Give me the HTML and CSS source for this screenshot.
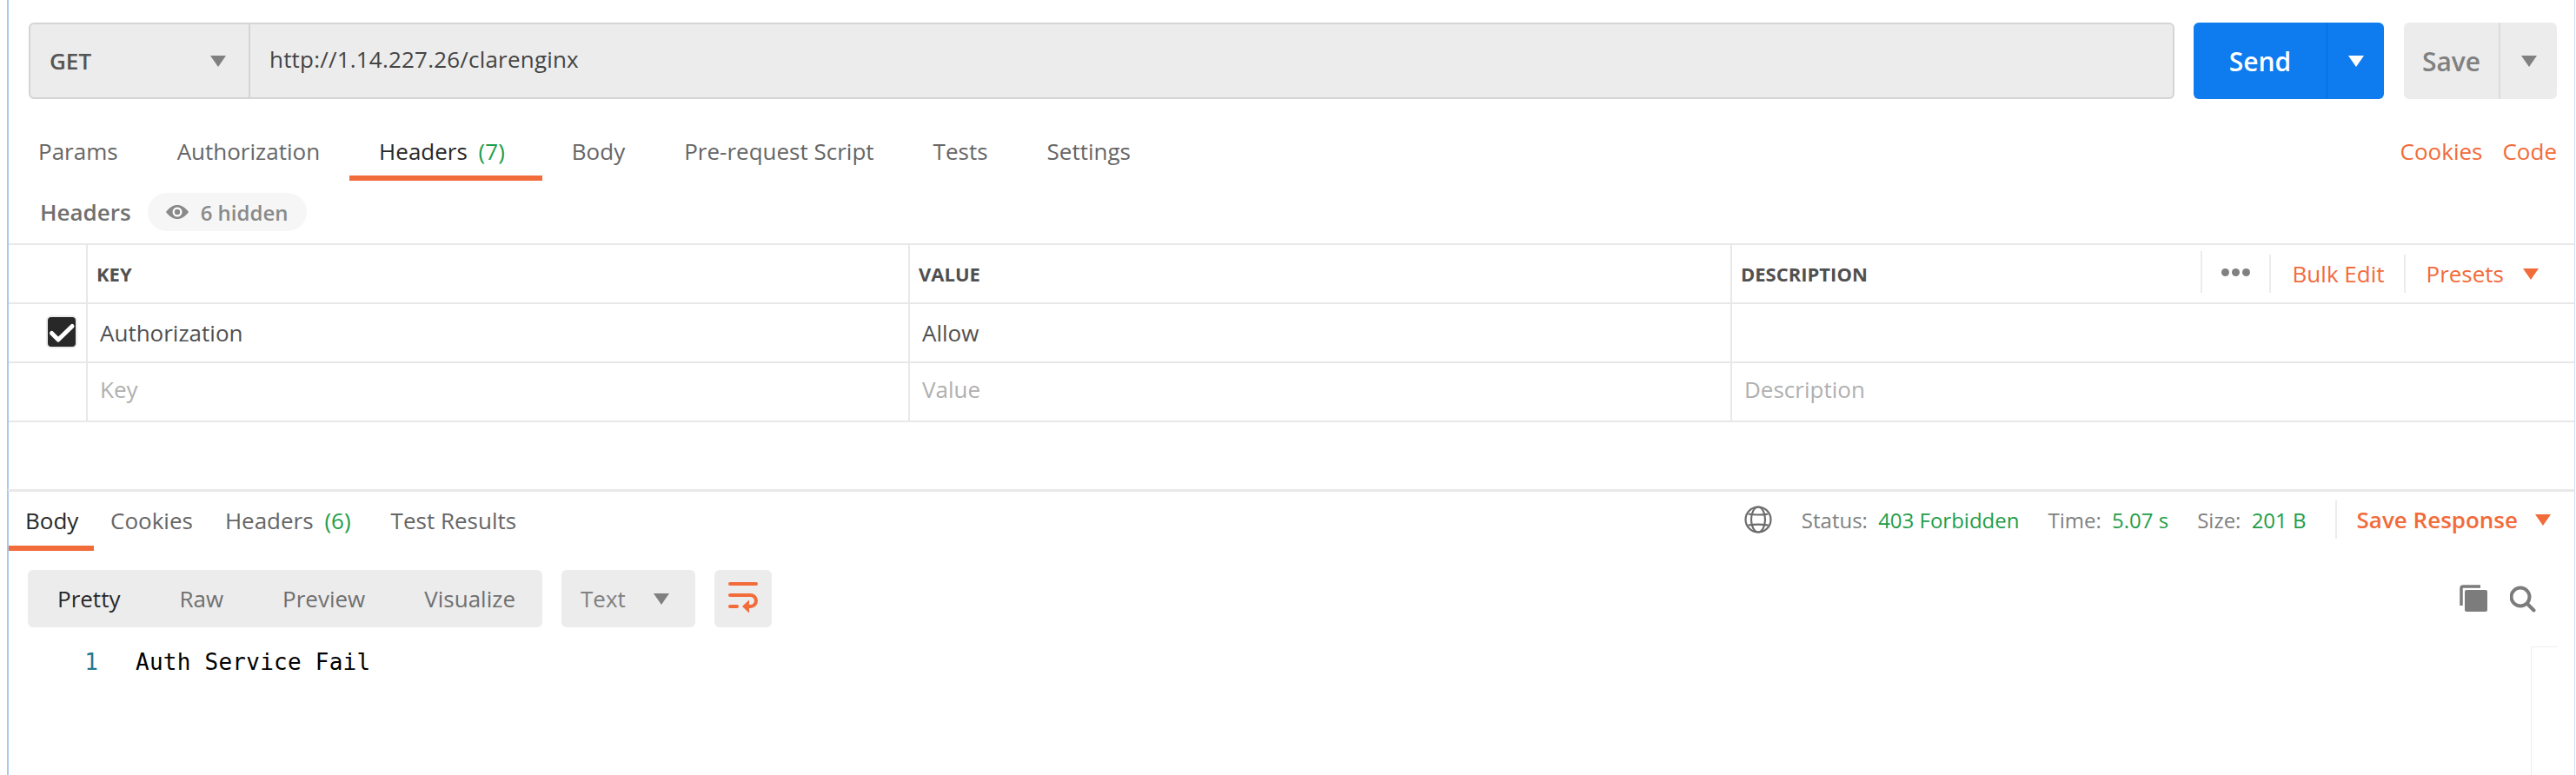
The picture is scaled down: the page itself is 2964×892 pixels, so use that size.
FILE: index.html
```html
<!DOCTYPE html>
<html lang="en">
<head>
<meta charset="utf-8">
<title>Postman</title>
<link rel="stylesheet" href="styles.css">
</head>
<body>
<div class="app">
  <section class="request">
    <div class="url-row">
      <div class="url-bar">
        <div class="method"><span>GET</span><i class="tri tri-grey"></i></div>
        <div class="url">http://1.14.227.26/clarenginx</div>
      </div>
      <div class="btn send"><span class="btn-main">Send</span><span class="btn-caret"><i class="tri tri-white"></i></span></div>
      <div class="btn save"><span class="btn-main">Save</span><span class="btn-caret"><i class="tri tri-grey"></i></span></div>
    </div>
    <div class="req-tabs">
      <nav class="tabs">
        <span class="tab">Params</span>
        <span class="tab">Authorization</span>
        <span class="tab active">Headers <em class="count">(7)</em></span>
        <span class="tab">Body</span>
        <span class="tab">Pre-request Script</span>
        <span class="tab">Tests</span>
        <span class="tab">Settings</span>
      </nav>
      <div class="links"><span>Cookies</span><span>Code</span></div>
    </div>
    <div class="hdr-title">
      <span class="hdr-label">Headers</span>
      <span class="pill">
        <svg class="eye" viewBox="0 0 26 16"><path d="M0 8C4 2.500 8.500 0 13 0s9 2.500 13 8c-4 5.500-8.500 8-13 8S4 13.500 0 8z" fill="#8a8a8a"/><circle cx="13" cy="8" r="5.500" fill="#fff"/><circle cx="13" cy="8" r="3.200" fill="#8a8a8a"/></svg>
        6 hidden
      </span>
    </div>
    <div class="kv">
      <div class="row head">
        <div class="cell chk"></div>
        <div class="cell">KEY</div>
        <div class="cell">VALUE</div>
        <div class="cell desc">
          <span>DESCRIPTION</span>
          <div class="tools">
            <span class="dots"><b></b><b></b><b></b></span>
            <span class="tool">Bulk Edit</span>
            <span class="tool last">Presets<i class="tri tri-orange"></i></span>
          </div>
        </div>
      </div>
      <div class="row">
        <div class="cell chk">
          <svg class="check" viewBox="0 0 36 38"><rect x="1" y="1" width="34" height="36" rx="5" fill="#282828" stroke="#ececec" stroke-width="2"/><path d="M6.500 20.500l7.500 7.500L30 12.500" fill="none" stroke="#fff" stroke-width="5" stroke-linecap="round" stroke-linejoin="round"/></svg>
        </div>
        <div class="cell val">Authorization</div>
        <div class="cell val">Allow</div>
        <div class="cell val"></div>
      </div>
      <div class="row">
        <div class="cell chk"></div>
        <div class="cell val ph">Key</div>
        <div class="cell val ph">Value</div>
        <div class="cell val ph">Description</div>
      </div>
    </div>
  </section>
  <section class="response">
    <div class="res-head">
      <nav class="tabs res-tabs">
        <span class="tab active">Body</span>
        <span class="tab">Cookies</span>
        <span class="tab">Headers <em class="count">(6)</em></span>
        <span class="tab">Test Results</span>
      </nav>
      <div class="meta">
        <svg class="globe" viewBox="0 0 32 32" fill="none" stroke="#6b6b6b" stroke-width="2.200"><circle cx="16" cy="16" r="14.500"/><ellipse cx="16" cy="16" rx="8" ry="14.500"/><path d="M4.500 9.500c6 1.300 17 1.300 23 0M4.500 22.500c6-1.300 17-1.300 23 0"/></svg>
        <span class="stat">Status: <em>403 Forbidden</em></span>
        <span class="stat">Time: <em>5.07 s</em></span>
        <span class="stat">Size: <em>201 B</em></span>
        <span class="save-res">Save Response<i class="tri tri-orange"></i></span>
      </div>
    </div>
    <div class="toolbar">
      <div class="seg">
        <span class="seg-item on">Pretty</span>
        <span class="seg-item">Raw</span>
        <span class="seg-item">Preview</span>
        <span class="seg-item">Visualize</span>
      </div>
      <div class="lang"><span>Text</span><i class="tri tri-grey"></i></div>
      <div class="wrap">
        <svg viewBox="0 0 34 40" fill="none" stroke="#f26b3a" stroke-width="4" stroke-linecap="round"><path d="M2 3h30M2 16h23.500a6.500 6.500 0 0 1 0 13H21M2 29h8"/><path d="M24 21.500v15L16 29z" fill="#f26b3a" stroke="none"/></svg>
      </div>
      <div class="actions">
        <svg class="copy" viewBox="0 0 32 32"><path d="M2 24V4a2 2 0 0 1 2-2h20" fill="none" stroke="#7c7c7c" stroke-width="3.500"/><rect x="6" y="6" width="26" height="25" rx="2" fill="#7c7c7c"/></svg>
        <svg class="search" viewBox="0 0 30 32" fill="none" stroke="#7c7c7c" stroke-width="4"><circle cx="12" cy="14" r="10.500"/><path d="M20 22l7.500 7.500" stroke-linecap="round"/></svg>
      </div>
    </div>
    <div class="code">
      <span class="ln">1</span><span class="txt">Auth Service Fail</span>
      <div class="scroll"></div>
    </div>
  </section>
</div>
</body>
</html>
```
FILE: styles.css
```css
* { box-sizing: border-box; }
html, body { margin: 0; padding: 0; background: #fff; }
body { font-family: "Open Sans", sans-serif; font-size: 26px; color: #505050; }
em { font-style: normal; color: #1f9d49; }
.app { width: 2964px; height: 892px; padding-left: 8px; padding-right: 1px; overflow: hidden; }
.request, .response { border-left: 2px solid #a9c8ec; border-right: 1px solid #cfdff2; }
.request { height: 563px; }
.response { height: 329px; border-top: 3px solid #e8e8e8; }
.url-row { display: flex; padding: 26px 20px 0 23px; height: 114px; }
.url-bar { width: 2469px; height: 88px; display: flex; background: #ececec; border: 2px solid #d4d4d4; border-radius: 6px; }
.method { width: 253px; border-right: 2px solid #d4d4d4; display: flex; align-items: center; justify-content: space-between; padding: 0 26px 0 22px; font-weight: 600; color: #555; }
.url { padding-left: 22px; line-height: 80px; color: #444; letter-spacing: .2px; }
.tri { display: inline-block; width: 0; height: 0; border-left: 9px solid transparent; border-right: 9px solid transparent; border-top: 13px solid #808080; }
.tri-white { border-top-color: #fff; }
.tri-orange { border-top-color: #f26b3a; }
.btn { height: 88px; display: flex; border-radius: 6px; font-weight: 600; font-size: 30px; }
.btn-main { display: flex; align-items: center; justify-content: center; }
.btn-caret { display: flex; align-items: center; justify-content: center; }
.send { width: 219px; margin-left: 22px; background: #0e7bef; color: #fff; }
.send .btn-main { width: 153px; }
.send .btn-caret { flex: 1; border-left: 1px solid #0a6ddb; }
.save { width: 176px; margin-left: 23px; background: #ececec; color: #808080; }
.save .btn-main { width: 109px; }
.save .btn-caret { flex: 1; border-left: 2px solid #dcdcdc; }
.req-tabs { display: flex; justify-content: space-between; height: 94px; padding-right: 20px; }
.tabs { display: flex; }
.tab { padding: 0 34px; height: 94px; line-height: 120px; color: #666; white-space: nowrap; border-bottom: 6px solid transparent; }
.tab.active { color: #282828; border-bottom-color: #f26b3a; }
.count { margin-left: 6px; margin-right: 9px; }
.links { display: flex; gap: 23px; color: #f26b3a; line-height: 120px; }
.hdr-title { height: 72px; display: flex; align-items: center; padding-left: 36px; }
.hdr-label { font-weight: 600; color: #707070; margin-right: 19px; }
.pill { height: 44px; width: 183px; border-radius: 22px; background: #f6f6f6; color: #8a8a8a; display: flex; align-items: center; gap: 14px; padding-left: 21px; font-size: 24px; font-weight: 600; }
.eye { width: 26px; height: 16px; }
.kv { border-top: 2px solid #e8e8e8; }
.row { display: grid; grid-template-columns: 91px 946px 946px 1fr; height: 68px; border-bottom: 2px solid #e8e8e8; }
.cell { border-right: 2px solid #e8e8e8; display: flex; align-items: center; padding-left: 10px; }
.cell:last-child { border-right: 0; }
.cell.chk { padding-left: 43px; }
.head .cell { font-size: 22px; font-weight: 700; color: #505050; }
.cell.val { padding-left: 14px; color: #505050; }
.desc { justify-content: space-between; }
.tools { display: flex; align-items: center; height: 48px; font-weight: 400; }
.head .tool { font-size: 26px; font-weight: 400; color: #f26b3a; height: 44px; display: flex; align-items: center; gap: 22px; padding: 0 23px 0 25px; border-left: 2px solid #ececec; }
.head .tool.last { padding: 0 41px 0 23px; }
.dots { display: flex; gap: 3px; height: 48px; align-items: center; padding: 0 22px; border-left: 2px solid #ececec; margin-top: -4px; }
.dots b { width: 9px; height: 9px; border-radius: 50%; background: #808080; }
.check { width: 36px; height: 38px; margin-bottom: 3px; }
.cell.ph { color: #b0b0b0; padding-bottom: 6px; }
.res-head { height: 68px; display: flex; justify-content: space-between; }
.res-tabs .tab { height: 68px; line-height: 66px; padding: 0 18px 0 19px; }
.res-tabs .tab.active { padding: 0 19px; width: 98px; }
.meta { display: flex; align-items: center; padding: 0 27px 4px 0; font-size: 24px; color: #808080; }
.globe { width: 32px; height: 32px; margin-right: 34px; }
.stat { margin-right: 33px; }
.stat em { margin-left: 6px; }
.save-res { color: #f26b3a; font-weight: 600; font-size: 26px; border-left: 2px solid #ececec; padding-left: 23px; height: 44px; display: flex; align-items: center; gap: 20px; }
.toolbar { display: flex; height: 66px; margin-top: 22px; padding-left: 22px; padding-right: 44px; }
.seg { width: 592px; background: #ececec; border-radius: 6px; display: flex; align-items: center; }
.seg-item { color: #707070; padding: 0 34px; }
.seg-item.on { color: #282828; }
.lang { width: 154px; margin-left: 22px; background: #ececec; border-radius: 6px; display: flex; align-items: center; justify-content: space-between; padding: 0 30px 0 22px; color: #808080; }
.wrap { width: 66px; margin-left: 22px; background: #ececec; border-radius: 6px; display: flex; align-items: center; justify-content: center; }
.wrap svg { width: 34px; height: 40px; }
.actions { margin-left: auto; display: flex; align-items: center; gap: 26px; }
.copy { width: 32px; height: 32px; }
.search { width: 30px; height: 32px; }
.code { position: relative; height: 170px; padding-top: 22px; font-family: "DejaVu Sans Mono", monospace; font-size: 26px; line-height: 36px; color: #000; display: flex; }
.ln { width: 146px; text-align: right; color: #237893; padding-right: 43px; }
.txt { white-space: pre; letter-spacing: .25px; }
.scroll { position: absolute; top: 22px; right: 20px; width: 30px; height: 150px; border-left: 1px solid #eee; border-top: 1px solid #eee; }
```
